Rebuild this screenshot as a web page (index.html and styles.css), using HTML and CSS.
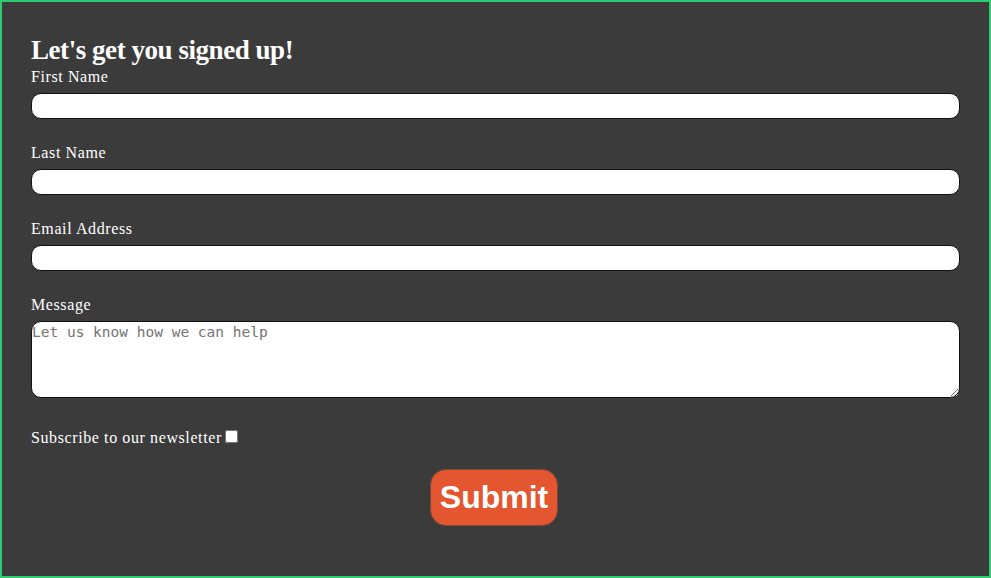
FILE: index.html
```html
<!DOCTYPE html>
<html>
<head>
<meta charset="utf-8">
<link rel="stylesheet" href="styles.css">
</head>
<body>
<div class="frame">
  <form class="signup">
    <h1 class="title">Let's get you signed up!</h1>
    <div class="field">
      <label class="label" for="fn">First Name</label>
      <input class="input" id="fn" type="text">
    </div>
    <div class="field">
      <label class="label" for="ln">Last Name</label>
      <input class="input" id="ln" type="text">
    </div>
    <div class="field">
      <label class="label" for="em">Email Address</label>
      <input class="input" id="em" type="email">
    </div>
    <div class="field">
      <label class="label" for="msg">Message</label>
      <textarea class="textarea" id="msg" placeholder="Let us know how we can help"></textarea>
    </div>
    <div class="check-row">
      <label class="label inline" for="sub">Subscribe to our newsletter</label><input class="checkbox" id="sub" type="checkbox">
    </div>
    <div class="actions">
      <button class="submit" type="button">Submit</button>
    </div>
  </form>
</div>
</body>
</html>
```
FILE: styles.css
```css
html, body {
  margin: 0;
  padding: 0;
  background: #3b3b3b;
}
.frame {
  width: 991px;
  height: 578px;
  box-sizing: border-box;
  border: 2px solid #2ecc71;
  background: #3b3b3b;
  padding: 31px 29px 0 29px;
}
.signup {
  display: flex;
  flex-direction: column;
}
.title {
  margin: 0;
  font-family: "Liberation Serif", serif;
  font-weight: bold;
  font-size: 27px;
  line-height: 34px;
  color: #ffffff;
  letter-spacing: -0.45px;
}
.field {
  display: flex;
  flex-direction: column;
  margin-bottom: 24px;
}
.label {
  font-family: "Liberation Serif", serif;
  font-size: 16px;
  line-height: 20px;
  color: #ffffff;
  letter-spacing: 0.6px;
}
.input {
  margin-top: 6px;
  height: 26px;
  box-sizing: border-box;
  border: 1px solid #111;
  border-radius: 10px;
  background: #fff;
  padding: 0 6px;
}
.textarea {
  margin-top: 6px;
  height: 77px;
  box-sizing: border-box;
  border: 1px solid #111;
  border-radius: 10px;
  background: #fff;
  padding: 2px 0 0 0;
  font-family: "DejaVu Sans Mono", monospace;
  font-size: 14.5px;
  resize: vertical;
}
.textarea::placeholder {
  color: #757575;
}
.check-row {
  display: flex;
  align-items: center;
  margin-top: 6px;
}
.checkbox {
  margin: 0 0 3px 3px;
  width: 13px;
  height: 13px;
}
.actions {
  display: flex;
  justify-content: center;
  margin-top: 21px;
}
.submit {
  font-family: "Liberation Sans", Arial, sans-serif;
  font-weight: bold;
  font-size: 32px;
  color: #fff;
  background: #e3562f;
  border: 1px solid #7a4a3a;
  border-radius: 16px;
  width: 128px;
  height: 57px;
  padding: 0;
  margin-left: -3px;
}
```
